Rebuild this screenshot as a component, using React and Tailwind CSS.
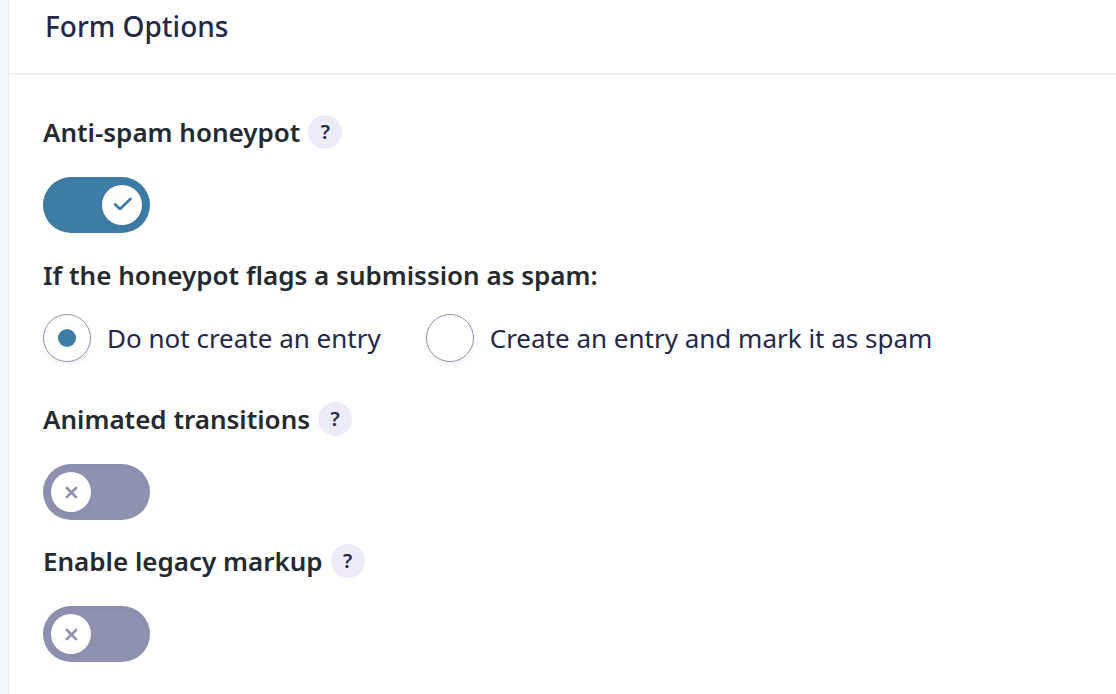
import { useState } from "react";

function HelpBadge({ label }) {
  return (
    <button
      type="button"
      aria-label={`Help: ${label}`}
      className="flex size-[34px] shrink-0 items-center justify-center rounded-full bg-[#ecebf8] text-xl leading-none font-semibold text-[#242748]"
    >
      ?
    </button>
  );
}

function Toggle({ id, checked, onChange }) {
  return (
    <span
      className={`relative flex h-14 w-[107px] items-center rounded-full p-2 shadow-[inset_0_2px_6px_rgba(36,39,72,0.05)] ${
        checked ? "justify-end bg-[#3e7da6]" : "justify-start bg-[#9092b2]"
      }`}
    >
      <input
        id={id}
        type="checkbox"
        role="switch"
        checked={checked}
        onChange={(e) => onChange(e.target.checked)}
        className="absolute inset-0 size-full cursor-pointer appearance-none rounded-full"
      />
      <span
        className={`pointer-events-none relative flex size-10 items-center justify-center rounded-full bg-white shadow-[0_2px_6px_rgba(36,39,72,0.08)] ${
          checked ? "text-[#3e7da6]" : "text-[#9092b2]"
        }`}
      >
        {checked ? (
          <svg viewBox="0 0 20 16" className="h-4 w-5" fill="none" stroke="currentColor" strokeWidth="2.8" strokeLinecap="round" strokeLinejoin="round">
            <path d="M3.2 7.5 L8 12 L18.4 2" />
          </svg>
        ) : (
          <svg viewBox="0 0 14 14" className="size-3.5" fill="none" stroke="currentColor" strokeWidth="2.7" strokeLinecap="round">
            <path d="M2.9 3 L12 12.1 M12 3 L2.9 12.1" />
          </svg>
        )}
      </span>
    </span>
  );
}

function ToggleField({ id, label, checked, onChange }) {
  return (
    <div className="flex flex-col items-start gap-7">
      <div className="flex h-[34px] items-center gap-2">
        <label htmlFor={id} className="text-[26px] leading-9 font-semibold text-[#242a30]">
          {label}
        </label>
        <HelpBadge label={label} />
      </div>
      <Toggle id={id} checked={checked} onChange={onChange} />
    </div>
  );
}

function RadioOption({ name, value, label, selected, onSelect }) {
  return (
    <label className="flex items-center gap-4 text-[26px] leading-9 text-[#242748]">
      <input
        type="radio"
        name={name}
        value={value}
        checked={selected === value}
        onChange={() => onSelect(value)}
        className="grid size-12 shrink-0 cursor-pointer appearance-none place-content-center rounded-full border border-[#9092b2] bg-white shadow-[0_3px_4px_rgba(36,39,72,0.06)] before:size-[18px] before:rounded-full checked:before:bg-[#3e7da6]"
      />
      {label}
    </label>
  );
}

export default function App() {
  const [honeypot, setHoneypot] = useState(true);
  const [spamAction, setSpamAction] = useState("discard");
  const [animated, setAnimated] = useState(false);
  const [legacy, setLegacy] = useState(false);

  return (
    <div className="min-h-screen bg-[#f4f7fc] pl-2 font-['Noto_Sans',sans-serif]">
      <section className="min-h-screen border-l border-[#e9e9f4] bg-white">
        <header className="border-b-2 border-[#efeff6] px-9 pt-2 pb-[29px]">
          <h2 className="text-[28px] leading-9 font-medium text-[#242748]">Form Options</h2>
        </header>

        <form className="flex flex-col gap-6 px-[34px] pt-10 pb-8">
          <ToggleField id="honeypot" label="Anti-spam honeypot" checked={honeypot} onChange={setHoneypot} />

          <fieldset className="mb-4">
            <legend className="mb-[21px] text-[26px] leading-9 font-semibold text-[#242a30]">
              If the honeypot flags a submission as spam:
            </legend>
            <div className="flex flex-wrap gap-x-[45px] gap-y-4">
              <RadioOption name="spam-action" value="discard" label="Do not create an entry" selected={spamAction} onSelect={setSpamAction} />
              <RadioOption name="spam-action" value="mark" label="Create an entry and mark it as spam" selected={spamAction} onSelect={setSpamAction} />
            </div>
          </fieldset>

          <ToggleField id="animated" label="Animated transitions" checked={animated} onChange={setAnimated} />
          <ToggleField id="legacy" label="Enable legacy markup" checked={legacy} onChange={setLegacy} />
        </form>
      </section>
    </div>
  );
}
